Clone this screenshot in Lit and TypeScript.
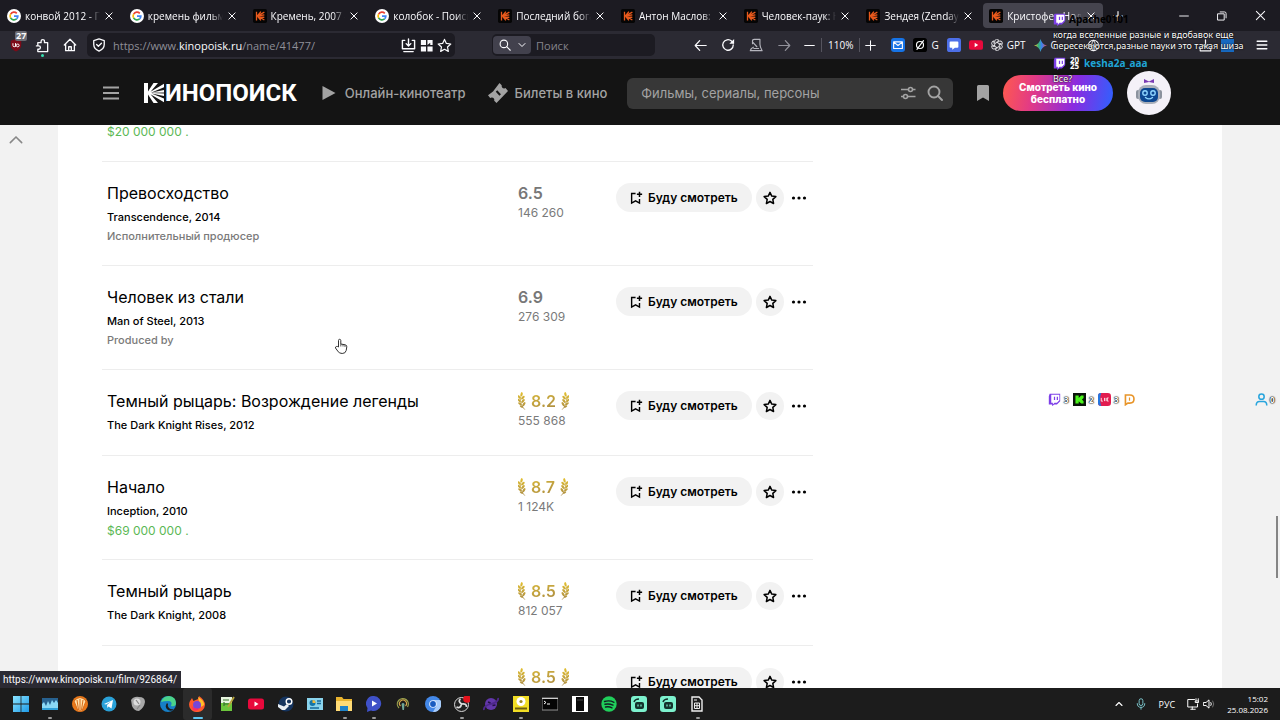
import { LitElement, html, css, svg, nothing, type TemplateResult } from "lit";
import { customElement } from "lit/decorators.js";
import { classMap } from "lit/directives/class-map.js";

type Part = ReturnType<typeof svg>;

const icon = (size: number, body: Part, box = "0 0 16 16"): TemplateResult =>
  html`<svg width=${size} height=${size} viewBox=${box} fill="none" stroke="none" aria-hidden="true">${body}</svg>`;

const line = (d: string, width = 1.5, color = "currentColor"): Part =>
  svg`<path d=${d} stroke=${color} stroke-width=${width} stroke-linecap="round" stroke-linejoin="round"/>`;

const fill = (d: string, color = "currentColor"): Part => svg`<path d=${d} fill=${color}/>`;

/* Brand marks */
const google = svg`<circle cx="8" cy="8" r="8" fill="#fff"/>
  <path d="M4.2 5.8A4.4 4.4 0 0 1 11.2 5" stroke="#ea4335" stroke-width="1.9"/>
  <path d="M4.1 10.2a4.6 4.6 0 0 1 0-4.4" stroke="#fbbc05" stroke-width="1.9"/>
  <path d="M11 11.4a4.5 4.5 0 0 1-6.9-1.3" stroke="#34a853" stroke-width="1.9"/>
  <path d="M8 8.1h4.4a4.4 4.4 0 0 1-1.5 3.3" stroke="#4285f4" stroke-width="1.9"/>`;
const kp = svg`<rect width="16" height="16" rx="2" fill="#050505"/>
  <path d="M4 3v10M5 8l4-5M5 8l8-4.4M5 8l8-1.4M5 8l8 1.6M5 8l8 4.6M5 8l4 5" stroke="#e8591c" stroke-width="1.5"/>`;
const twitch = svg`<path d="M2 1h13v9l-4 4H8l-3 2v-2H1V4z" fill="#7d3fe8"/><path d="M4 2h10v7l-3 3H8l-2 2v-2H4z" fill="#fff"/><path d="M8 4.500v4M11.500 4.500v4" stroke="#7d3fe8" stroke-width="1.500"/>`;
const youtube = svg`<rect y="2.500" width="16" height="11" rx="2.500" fill="#e8093c"/><path d="M6.500 5.500v5l4-2.500z" fill="#fff"/>`;

const cross = line("M3 3l10 10M13 3L3 13", 1.6);
const search = svg`<circle cx="6.500" cy="6.500" r="5" stroke="currentColor" stroke-width="1.500"/>${line("M10.300 10.300l4.700 4.700")}`;
const star = line("M8 1.500l2 4.300 4.700.6-3.500 3.200.9 4.700L8 12l-4.100 2.300.9-4.700L1.300 6.400 6 5.800z", 1.7);
const starThin = line("M8 1.500l2 4.300 4.700.6-3.500 3.200.9 4.700L8 12l-4.100 2.300.9-4.700L1.300 6.400 6 5.800z", 1.3);
const addMark = svg`<path d="M7.500 2.800H3v11l4.500-2.600 4.500 2.600V9" stroke="currentColor" stroke-width="1.600"/><path d="M12 .8v6M9 3.800h6" stroke="currentColor" stroke-width="1.700"/>`;

/* Laurel branch: thin stem with paired leaves */
const laurelBody = svg`<path d="M3.200 3C1.500 8 2.500 13 6.800 17.600" stroke="url(#g)" stroke-width=".8"/>
  <g fill="url(#g)">
    <ellipse cx="3.600" cy="2.200" rx="1.100" ry="2.100" transform="rotate(12 3.600 2.200)"/>
    <ellipse cx="1.100" cy="5" rx="1" ry="2" transform="rotate(-28 1.100 5)"/>
    <ellipse cx="4.900" cy="5.600" rx="1.100" ry="2.300" transform="rotate(45 4.900 5.600)"/>
    <ellipse cx="1.100" cy="8.400" rx="1" ry="2" transform="rotate(-38 1.100 8.400)"/>
    <ellipse cx="5" cy="9" rx="1.100" ry="2.400" transform="rotate(42 5 9)"/>
    <ellipse cx="1.900" cy="11.800" rx="1" ry="2" transform="rotate(-50 1.900 11.800)"/>
    <ellipse cx="5.900" cy="12.200" rx="1.100" ry="2.300" transform="rotate(32 5.900 12.200)"/>
    <ellipse cx="3.500" cy="14.600" rx=".9" ry="1.900" transform="rotate(-64 3.500 14.600)"/>
  </g>`;
const laurel = (flip = false) => html`<svg width="8" height="18" viewBox="0 0 8 18" fill="none" aria-hidden="true">
  <defs><linearGradient id="g" gradientUnits="userSpaceOnUse" x1="0" y1="0" x2="0" y2="18"><stop stop-color="#e3c02f"/><stop offset="1" stop-color="#a98a43"/></linearGradient></defs>
  ${flip ? svg`<g transform="matrix(-1 0 0 1 8 0)">${laurelBody}</g>` : laurelBody}</svg>`;

interface Film {
  title?: string;
  original?: string;
  role?: string;
  budget?: string;
  rating: string;
  votes: string;
  top?: boolean;
}

const films: Film[] = [
  { title: "Превосходство", original: "Transcendence, 2014", role: "Исполнительный продюсер", rating: "6.5", votes: "146 260" },
  { title: "Человек из стали", original: "Man of Steel, 2013", role: "Produced by", rating: "6.9", votes: "276 309" },
  { title: "Темный рыцарь: Возрождение легенды", original: "The Dark Knight Rises, 2012", rating: "8.2", votes: "555 868", top: true },
  { title: "Начало", original: "Inception, 2010", budget: "$69 000 000", rating: "8.7", votes: "1 124K", top: true },
  { title: "Темный рыцарь", original: "The Dark Knight, 2008", rating: "8.5", votes: "812 057", top: true },
  { rating: "8.5", votes: "", top: true },
];

const base = css`
  *, *::before, *::after { box-sizing: border-box; }
  svg { display: block; flex: none; }
  button, input { font: inherit; color: inherit; border: 0; padding: 0; margin: 0; background: none; }
  a { color: inherit; text-decoration: none; }
`;

@customElement("browser-chrome")
export class BrowserChrome extends LitElement {
  static styles = [base, css`
    :host { display: block; font-family: "Open Sans", "Noto Sans", sans-serif; font-size: 10px; color: #fbfbfe; }
    .tabbar { display: flex; height: 31px; background: #1c1b22; }
    .tabs { display: flex; flex: 1; min-width: 0; }
    .tab { flex: 1 1 0; min-width: 0; display: flex; align-items: center; gap: 4px; margin: 3px 2px 3px 1px; padding: 0 7px 0 6px; border-radius: 4px; font-weight: 500; }
    .active { background: #45444e; }
    .tab-title { flex: 1; min-width: 0; white-space: nowrap; -webkit-mask-image: linear-gradient(90deg, #000 84%, transparent); mask-image: linear-gradient(90deg, #000 84%, transparent); }
    .close { display: flex; }
    .window { display: flex; align-items: center; gap: 28px; width: 175px; padding: 0 14px 0 7px; }
    .minimize { margin-left: auto; }
    .toolbar { display: flex; align-items: center; height: 28px; background: #2b2a33; padding-left: 2px; }
    .slot { position: relative; display: flex; align-items: center; justify-content: center; width: 27px; height: 24px; }
    .count { position: absolute; left: 13px; top: -2px; padding: 0 1px; border-radius: 2px; background: #6c6c74; font-size: 9px; line-height: 10px; font-weight: 700; }
    .dot { position: absolute; left: 12px; bottom: 0; width: 3px; height: 3px; border-radius: 2px; background: #35e0b0; }
    .url { display: flex; flex: 1; align-items: center; gap: 5px; height: 24px; margin: 0 37px 0 4px; padding: 0 3px 0 5px; border-radius: 5px; background: #1c1b22; }
    .address { flex: 1; font-size: 11px; color: #8f8f98; white-space: nowrap; padding-left: 2px; }
    .domain { color: #fbfbfe; }
    .page-actions { display: flex; align-items: center; gap: 3px; }
    .find { display: flex; align-items: center; width: 163px; height: 22px; margin-right: 31px; border-radius: 5px; background: #1c1b22; }
    .engine { display: flex; align-items: center; gap: 7px; width: 38px; height: 18px; margin-left: 1px; padding-left: 6px; border-radius: 4px; background: #42414d; }
    .find input { width: 100px; margin-left: 5px; font-size: 11px; outline: 0; }
    .find input::placeholder { color: #85858d; opacity: 1; }
    .right { display: flex; align-items: center; width: 594px; }
    .nav { display: flex; }
    .nav .slot { width: 28px; }
    .dim { color: #92929b; }
    .zoom { display: flex; align-items: center; height: 14px; margin: 0 5px; padding: 0 6px; border: solid #55545e; border-width: 0 1px; }
    .zoom-step { display: flex; width: 14px; justify-content: center; margin-left: 4px; }
    .links { display: flex; align-items: center; gap: 8px; margin-left: 15px; }
    .links a { display: flex; align-items: center; gap: 4px; }
    .end { display: flex; align-items: center; margin-left: auto; padding-right: 12px; }
    .downloads { margin: 0 44px 0 99px; }
  `];

  private tabs: [string, boolean][] = [
    ["конвой 2012 - По", false],
    ["кремень фильм 2", false],
    ["Кремень, 2007 —", true],
    ["колобок - Поиск", false],
    ["Последний богат", true],
    ["Антон Маслов: ф", true],
    ["Человек-паук: Но", true],
    ["Зендея (Zendaya)", true],
    ["Кристофер Нола", true],
  ];

  render() {
    return html`
      <div class="tabbar">
        <div class="tabs">
          ${this.tabs.map(([title, isKp], i) => html`
            <div class=${classMap({ tab: true, active: i === 8 })}>
              ${icon(14, isKp ? kp : google)}
              <span class="tab-title">${title}</span>
              <button class="close" aria-label="Закрыть">${icon(10, cross)}</button>
            </div>`)}
        </div>
        <div class="window">
          <button aria-label="Новая вкладка">${icon(12, line("M8 2v12M2 8h12"))}</button>
          <button class="minimize" aria-label="Свернуть">${icon(10, line("M1 8h14"))}</button>
          <button aria-label="Окно">${icon(10, line("M1.500 4.500h10v10h-10zM5 1.500h7q2.500 0 2.500 2.500v7"))}</button>
          <button aria-label="Закрыть окно">${icon(11, line("M2 2l12 12M14 2L2 14"))}</button>
        </div>
      </div>
      <div class="toolbar">
        <button class="slot" aria-label="uBlock">${icon(14, svg`<path d="M8 1l6 2v5q0 5-6 7.500Q2 13 2 8V3z" fill="#7d0b18"/><path d="M4.500 6v2.500a1.500 1.500 0 0 0 3 0V6v4" stroke="#fff" stroke-width="1.100"/><circle cx="10" cy="8.500" r="1.600" stroke="#fff" stroke-width="1.100"/>`)}<span class="count">27</span></button>
        <button class="slot" aria-label="Расширения">${icon(15, line("M3 7.500V5h3.500V3.500a1.800 1.800 0 0 1 3.600 0V5H13.500v9.500H3V12h1a1.800 1.800 0 0 0 0-3.600H1.500", 1.4))}<span class="dot"></span></button>
        <button class="slot" aria-label="Домой">${icon(14, line("M1.500 8L8 1.500 14.500 8M3 7v7.500h10V7M6.500 14V10h3v4", 1.5))}</button>
        <div class="url">
          ${icon(14, svg`${line("M8 1l6 2v4.500q0 5-6 7.500-6-2.500-6-7.500V3z")}${line("M5.300 7.500l2 2 3.500-3.500")}`)}
          <span class="address">https://www.<span class="domain">kinopoisk.ru</span>/name/41477/</span>
          <div class="page-actions">
            <button aria-label="Сохранить">${icon(15, line("M4 2.500H1.500v9h13v-9H12M8 1v7M5.500 6L8 8.500 10.500 6M3 14.500h10"))}</button>
            <button aria-label="Сетка">${icon(15, fill("M2 2h5.500v5.500H2zM2 9h5.500v5.500H2zM9 9h5.500v5.500H9zM9 2h5.500v5.500H12V5L9 7.500z"))}</button>
            <button aria-label="Закладка">${icon(15, starThin)}</button>
          </div>
        </div>
        <div class="find">
          <span class="engine">${icon(12, search)}${icon(8, line("M2 5l6 6 6-6", 2))}</span>
          <input aria-label="Поиск" placeholder="Поиск">
        </div>
        <div class="right">
          <div class="nav">
            <button class="slot" aria-label="Назад">${icon(13, line("M15 8H1.500M7 2L1.500 8 7 14"))}</button>
            <button class="slot" aria-label="Обновить">${icon(14, svg`${line("M14 8a6 6 0 1 1-2-4.500L14 5.500")}${fill("M15 1v5.500H9.500z")}`)}</button>
            <button class="slot" aria-label="Закладки">${icon(14, line("M4 6.500V3.500Q4 1.500 6 1.500h6.500V7Q12.500 10 15 14.500H1.500Q2 11.500 5 10.500M4.500 5L9 10M5.500 12h5.500", 1.3, "#b5b5bd"))}</button>
            <button class="slot dim" aria-label="Вперёд">${icon(13, line("M1 8h13.500M9 2l5.500 6L9 14"))}</button>
          </div>
          <button class="zoom-step" aria-label="Уменьшить">${icon(11, line("M1 8h14"))}</button>
          <span class="zoom">110%</span>
          <button aria-label="Увеличить">${icon(11, line("M1 8h14M8 1v14"))}</button>
          <div class="links">
            <a href="#" aria-label="Почта">${icon(14, svg`<rect width="16" height="16" rx="3.500" fill="#1673e6"/>${line("M3 4.500h10v7.500H3zM3.500 5L8 8.500 12.500 5", 1.3)}`)}</a>
            <a href="#">${icon(14, svg`<rect width="16" height="16" rx="3" fill="#000"/><circle cx="8" cy="8" r="4" stroke="#fff" stroke-width="1.300"/>${line("M4.500 13L12 3", 1.3)}`)}G</a>
            <a href="#" aria-label="Чат">${icon(14, svg`<rect width="16" height="16" rx="3" fill="#4d6fe8"/>${fill("M4 4h8q1 0 1 1v5q0 1-1 1H9l-3 2.500V11H4q-1 0-1-1V5q0-1 1-1z", "#fff")}`)}</a>
            <a href="#" aria-label="YouTube">${icon(14, youtube)}</a>
            <a href="#">${icon(12, svg`<g stroke="#e4e4e8" stroke-width="1.200">${[0, 60, 120, 180, 240, 300].map(a => svg`<path transform="rotate(${a} 8 8)" d="M8 4.500L5 6.300V2.800a3 3 0 0 1 5.500-1l-3 1.800"/>`)}</g>`)}GPT</a>
            <a href="#">${icon(13, svg`<defs><linearGradient id="gem"><stop stop-color="#f8bd32"/><stop offset=".35" stop-color="#36b37a"/><stop offset=".6" stop-color="#3b82f6"/><stop offset="1" stop-color="#e64b4b"/></linearGradient></defs>${fill("M8 0q1.500 6.500 8 8-6.500 1.500-8 8-1.500-6.500-8-8 6.500-1.500 8-8z", "url(#gem)")}`)}С</a>
          </div>
          <div class="end">
            ${icon(13, svg`<circle cx="8" cy="8" r="6.500" stroke="currentColor" stroke-width="1.300"/>${line("M1.500 8h13M8 1.500q-5 6.500 0 13M8 1.500q5 6.500 0 13", 1.2)}`)}
            <button class="downloads" aria-label="Загрузки">${icon(13, line("M8 1v9M4.500 7L8 10.500 11.500 7M1.500 11v3.500h13V11", 1.5))}</button>
            <button aria-label="Меню">${icon(12, line("M1.500 3h13M1.500 8h13M1.500 13h13", 1.7))}</button>
          </div>
        </div>
      </div>`;
  }
}

@customElement("site-header")
export class SiteHeader extends LitElement {
  static styles = [base, css`
    :host { display: flex; align-items: center; height: 66px; padding: 2px 109px 0 103px; background: #141414; color: #a3a3a3; font-family: Inter, sans-serif; font-size: 13px; font-weight: 500; }
    .logo { display: flex; align-items: center; gap: 1px; margin-left: 25px; color: #fff; font: 700 24px/28px Roboto, sans-serif; }
    .nav { display: flex; align-items: center; gap: 8px; white-space: nowrap; }
    .cinema { margin-left: 24px; }
    .tickets { margin-left: 22px; gap: 7px; }
    .search { display: flex; align-items: center; flex: 1; gap: 11px; height: 31px; margin-left: 20px; padding: 0 10px 0 14px; border-radius: 6px; background: #373737; }
    .search input { flex: 1; min-width: 0; outline: 0; font-weight: 400; }
    .search input::placeholder { color: #a3a3a3; opacity: 1; }
    .mark { margin: 0 14px 0 24px; }
    .watch { width: 110px; height: 36px; border-radius: 18px; color: #fff; font-size: 10px; line-height: 12px; font-weight: 800; background: linear-gradient(100deg, #ff5a4e 0%, #e23a86 28%, #8a2be0 65%, #2d62ff 100%); }
    .avatar { display: flex; align-items: center; justify-content: center; width: 44px; height: 44px; margin-left: 14px; border-radius: 22px; background: #f4f1f8; }
  `];

  render() {
    return html`
      <button aria-label="Меню">${icon(16, svg`<path d="M0 2.500h16M0 8h16M0 13.500h16" stroke="#a3a3a3" stroke-width="1.800"/>`)}</button>
      <a class="logo" href="#" aria-label="Кинопоиск">
        <svg width="20" height="20" viewBox="0 0 20 20" aria-hidden="true"><path fill="#fff" d="M0 0h4v8.500L9.500 0H14L6.500 8.700 20 .8v3.400L7.500 9.500 20 7v2.400l-12.500.3V10l12.500.4V13L7.500 10.500 20 15.600v3.600L6.500 11.300 14 20H9.500L4 11.500V20H0z"/></svg><span>ИНОПОИСК</span>
      </a>
      <a class="nav cinema" href="#">${icon(16, fill("M1.500 1l13 7-13 7z"))}Онлайн-кинотеатр</a>
      <a class="nav tickets" href="#">${icon(20, svg`<path d="M11.500 0l2.200 2.200q-.4 3 2.600 3.200l1.200-.4L20 8 8.500 20l-2.300-2.300q.6-3-2.500-3.200L2.200 15 0 12.300 5 8.500z" fill="currentColor"/><path d="M8.500 8l3.700 4" stroke="#141414" stroke-width="2"/>`, "0 0 20 20")}Билеты в кино</a>
      <div class="search">
        <input aria-label="Поиск по сайту" placeholder="Фильмы, сериалы, персоны">
        <button aria-label="Фильтры">${icon(16, svg`<g stroke="currentColor" stroke-width="1.600"><path d="M1 4.500h7.500M12.500 4.500H15.500M1 11.500h2.500M7.500 11.500h8"/><circle cx="10.500" cy="4.500" r="2"/><circle cx="5.500" cy="11.500" r="2"/></g>`)}</button>
        <button aria-label="Найти">${icon(16, svg`<circle cx="7" cy="7" r="5.500" stroke="currentColor" stroke-width="1.900"/>${line("M11 11l4 4", 1.9)}`)}</button>
      </div>
      <a class="mark" href="#" aria-label="Буду смотреть"><svg width="12" height="16" viewBox="0 0 12 16"><path d="M0 1.500Q0 0 1.500 0h9Q12 0 12 1.500V16l-6-3.500L0 16z" fill="currentColor"/></svg></a>
      <button class="watch">Смотреть кино<br>бесплатно</button>
      <a class="avatar" href="#" aria-label="Профиль">${icon(28, svg`
        <path d="M9 0l5 2.500L19 0v4l-5-1L9 4z" fill="#7a3bb4"/>
        <rect x="1" y="11" width="4" height="9" rx="2" fill="#8b929e"/><rect x="23" y="11" width="4" height="9" rx="2" fill="#8b929e"/>
        <rect x="3" y="6" width="22" height="19" rx="8" fill="#a9afba"/><rect x="5" y="9" width="18" height="14" rx="5" fill="#0d4791"/>
        <circle cx="10" cy="14" r="2.200" stroke="#8fd6ff" stroke-width="1.400"/><circle cx="18" cy="14" r="2.200" stroke="#8fd6ff" stroke-width="1.400"/>
        <path d="M10.500 18.500q3.500 2.800 7 0" stroke="#8fd6ff" stroke-width="1.400" stroke-linecap="round"/>`, "0 0 28 28")}</a>`;
  }
}

@customElement("film-list")
export class FilmList extends LitElement {
  static styles = [base, css`
    :host { display: block; max-width: 711px; font-family: Inter, sans-serif; font-size: 12px; line-height: 19px; color: #000; }
    .previous { margin-top: -3px; padding: 0 5px 20px; border-bottom: 1px solid #ededed; }
    .row { display: grid; grid-template-columns: minmax(0, 1fr) 98px 197px; min-height: 86px; padding: 19px 0 19px 5px; border-bottom: 1px solid #ededed; }
    .title { display: block; margin-bottom: 3px; font-size: 16px; line-height: 24px; font-weight: 400; }
    .line { display: block; }
    .small { font-size: 11px; font-weight: 500; }
    .muted { color: #7a7a7a; }
    .money { color: #5bb855; }
    .score { display: flex; align-items: center; gap: 5px; height: 24px; color: #777; font-size: 16px; font-weight: 600; }
    .top .value { color: transparent; background: linear-gradient(160deg, #d9b93b, #a88842); -webkit-background-clip: text; background-clip: text; }
    .votes { display: block; line-height: 16px; color: #7a7a7a; }
    .actions { display: flex; align-items: center; gap: 4px; height: 29px; margin-top: 2px; }
    .will { display: flex; align-items: center; gap: 5px; width: 136px; height: 29px; padding-left: 13px; border-radius: 15px; background: #f2f2f2; font-weight: 600; white-space: nowrap; }
    .fav { display: flex; align-items: center; justify-content: center; width: 28px; height: 28px; border-radius: 14px; background: #f2f2f2; }
    .more { display: flex; align-items: center; justify-content: center; width: 22px; }
  `];

  render() {
    return html`
      <div class="previous"><span class="line money">$20 000 000 .</span></div>
      ${films.map(f => html`
        <div class="row">
          <div>
            ${f.title ? html`<a class="title" href="#">${f.title}</a>` : nothing}
            ${f.original ? html`<span class="line small">${f.original}</span>` : nothing}
            ${f.role ? html`<span class="line small muted">${f.role}</span>` : nothing}
            ${f.budget ? html`<span class="line money">${f.budget} .</span>` : nothing}
          </div>
          <div>
            <span class=${classMap({ score: true, top: !!f.top })}>
              ${f.top ? laurel() : nothing}<span class="value">${f.rating}</span>${f.top ? laurel(true) : nothing}
            </span>
            <span class="votes">${f.votes}</span>
          </div>
          <div class="actions">
            <button class="will">${icon(14, addMark)}Буду смотреть</button>
            <button class="fav" aria-label="Оценить">${icon(14, star)}</button>
            <button class="more" aria-label="Ещё">${icon(16, svg`<g fill="currentColor"><circle cx="2.500" cy="8" r="1.600"/><circle cx="8" cy="8" r="1.600"/><circle cx="13.500" cy="8" r="1.600"/></g>`)}</button>
          </div>
        </div>`)}`;
  }
}

@customElement("task-bar")
export class TaskBar extends LitElement {
  static styles = [base, css`
    :host { display: flex; align-items: center; justify-content: space-between; height: 32px; padding: 0 12px 0 6px; background: #1c1c1c; color: #fff; font-family: "Open Sans", "Noto Sans", sans-serif; font-size: 9px; }
    .apps { display: flex; width: 706px; height: 32px; }
    .app { position: relative; display: flex; flex: 1 1 0; align-items: center; justify-content: center; }
    .current { background: #2b2b2b; border-radius: 3px; }
    .open::after { content: ""; position: absolute; bottom: 1px; left: 13px; width: 4px; height: 2px; border-radius: 1px; background: #9a9a9a; }
    .current::after { content: ""; position: absolute; bottom: 1px; left: 10px; width: 10px; height: 2px; border-radius: 1px; background: #5cc8f5; }
    .tray { display: flex; align-items: center; gap: 12px; }
    .pair { display: flex; gap: 4px; }
    .clock { text-align: right; font-size: 8px; line-height: 11px; }
  `];

  private apps: Part[] = [
    svg`<defs><linearGradient id="w" x2="1" y2="1"><stop stop-color="#8be4ff"/><stop offset="1" stop-color="#1e9be8"/></linearGradient></defs><path d="M0 0h7.600v7.600H0zM8.400 0H16v7.600H8.400zM0 8.400h7.600V16H0zM8.400 8.400H16V16H8.400z" fill="url(#w)"/>`,
    svg`<rect y="2" width="16" height="12" fill="#27618f"/><path d="M0 12V8l2-2 2 4 2-5 2 4 2-5 2 3 2-3 2 3v5z" fill="#8ad8f5"/><path d="M0 12h16v2H0z" fill="#2f9fd8"/>`,
    svg`<circle cx="8" cy="8" r="8" fill="#e97819"/><path d="M2 5q6-7 12 0l-4 10H6zM5 4l1.500 10M8 3v12M11 4L9.500 14" fill="#ffe0a8" stroke="#d86b18" stroke-width="1"/>`,
    svg`<circle cx="8" cy="8" r="7.500" fill="#2aa1d8"/><path d="M3 8l9-4-1.500 8.500-3-2-1 1.500-.5-3 4-3.500-5 3z" fill="#fff"/>`,
    svg`<path d="M1 4q3-4 8-3 6 0 6 5-1 6-6 9-5 0-7-5z" fill="#a7a7a7"/><circle cx="7" cy="6" r="3.500" fill="#ddd"/><path d="M6 4l3 4M10 9l-3 4" stroke="#888" stroke-width="1.200"/>`,
    svg`<circle cx="8" cy="8" r="8" fill="#167fc6"/><path d="M1 6Q3 0 9 0q7 1 7 7 0 4-5 3 2-5-3-5-4 0-7 1z" fill="#4bd38a"/><path d="M7 7q-3 4 1 7 4 2 6-1-3 1-5-1-2-2-1-4z" fill="#1c1c1c"/>`,
    svg`<path d="M8 16A7.500 7.500 0 0 1 1 5l2-3 1.500 3L9 3l1-3q6 4 6 9a7.500 7.500 0 0 1-8 7z" fill="#ff5a2b"/><path d="M9 1q6 3 6 8l-3 2-2-6z" fill="#ffc328"/><circle cx="8" cy="9" r="4" fill="#7647d8"/><path d="M2 9q3 5 9 3-3 4-7 2z" fill="#f92b63"/>`,
    svg`<path d="M2 1h11v14H2z" fill="#e8f5df"/><path d="M2 7h11v8H2z" fill="#6cc63c"/><path d="M4 4h6M5 6v4M5 8h5" stroke="#37732d" stroke-width="1.200"/><path d="M15 1L9 11" stroke="#b7a33b" stroke-width="1.800"/>`,
    youtube,
    svg`<circle cx="8" cy="8" r="7.500" fill="#15345f"/><circle cx="11" cy="5.500" r="2.800" stroke="#fff" stroke-width="1.400"/><path d="M0 8l6 2.500L9 8l2 2-4 4H4L0 11z" fill="#e8eef5"/>`,
    svg`<path d="M0 2h16v12H0z" fill="#8ad4ed"/><circle cx="5.500" cy="7" r="3" fill="#1575a8"/><path d="M5.500 7V4a3 3 0 0 1 3 3z" fill="#f4bb39"/><path d="M10 5h4M10 7.500h4M3 12h9" stroke="#176a9b" stroke-width="1.300"/>`,
    svg`<path d="M0 1h6l1.500 2H16v12H0z" fill="#e9b42f"/><path d="M0 5h16v10H0z" fill="#ffdb75"/><path d="M4 10h8v5H4z" fill="#1f83c9"/>`,
    svg`<path d="M8 0a7.500 7.500 0 1 1-3 14.500L1 16l.5-4A7.500 7.500 0 0 1 8 0z" fill="#3f51c8"/><path d="M6 4.500v6l5-3z" fill="#fff"/>`,
    svg`<path d="M4 12A5.500 5.500 0 1 1 12.500 11" stroke="#98a04d" stroke-width="1.300"/><path d="M5.500 10a3.500 3.500 0 1 1 5 0" stroke="#d3a64b" stroke-width="1.200"/><path d="M6.500 8q1.500-2 3 0L9 14H7.500z" fill="#6fa799"/>`,
    svg`<circle cx="8" cy="8" r="8" fill="#4388e8"/><path d="M8 4h7.300A8 8 0 0 1 8 16l3.400-6z" fill="#a9cdfa"/><circle cx="8" cy="8" r="3.800" fill="#e5f0ff"/><circle cx="8" cy="8" r="2.900" fill="#195cc0"/>`,
    svg`<circle cx="7.500" cy="8.500" r="7" fill="#222" stroke="#d8d8d8"/><path d="M7.500 8q-4-3-1-5M7.500 8q5-1 5 3M7.500 8q-1 5-5 3" stroke="#ddd" stroke-width="1.700"/><circle cx="13" cy="3" r="3.800" fill="#e4121c"/>`,
    svg`<circle cx="8" cy="8" r="6" fill="#6237aa"/><path d="M1 14Q0 10 8 8t7-6" stroke="#4d278d" stroke-width="1.800"/><path d="M5 6l2.500 1M9.500 9.500l3-.5" stroke="#231044" stroke-width="1.500"/>`,
    svg`<path d="M0 0h16v16H0z" fill="#f1dd24"/><circle cx="8" cy="5.500" r="4.500" fill="#fff"/><circle cx="8" cy="5.500" r="1.600" fill="#9d8b20"/><path d="M2 12.500h12" stroke="#6c5d0e" stroke-width="2"/>`,
    svg`<path d="M0 2h16v12H0z" fill="#050505" stroke="#929292"/><path d="M0 2.500h16" stroke="#cfcfcf"/><path d="M2 5l2 1.500L2 8M5 8h3" stroke="#fff"/>`,
    svg`<path d="M0 0h16v16H0z" fill="#fff"/><path d="M4 1h8v14H4z" fill="#080808"/><path d="M5 4h6" stroke="#444"/>`,
    svg`<circle cx="8" cy="8" r="7.700" fill="#20cf5b"/><path d="M3.500 5.500q5-1.500 9.500.8M4 8.300q4-1 8 .8M4.500 11q3.500-.8 6.500.8" stroke="#122" stroke-width="1.400" stroke-linecap="round"/>`,
    svg`<rect width="16" height="16" rx="3" fill="#7df2ce"/><rect x="4" y="6" width="9" height="7" rx="2" fill="#14332c"/><path d="M3 6q1-3 5-3" stroke="#14332c" stroke-width="1.500"/><path d="M7 8.500v2M10 8.500v2" stroke="#7df2ce" stroke-width="1.200"/>`,
    svg`<rect width="16" height="16" rx="3" fill="#7df2ce"/><rect x="4" y="6" width="9" height="7" rx="2" fill="#14332c"/><path d="M3 6q1-3 5-3" stroke="#14332c" stroke-width="1.500"/><path d="M7 8.500v2M10 8.500v2" stroke="#7df2ce" stroke-width="1.200"/>`,
    svg`<path d="M3 1h7l3 3v11H3z" stroke="#eee" stroke-width="1.400"/><path d="M5.500 7h5v5.500h-5zM5.500 9.700h5M8 7v5.500M5 4h3" stroke="#eee"/>`,
  ];

  render() {
    const opened = [1, 11, 12, 15, 17, 23];
    return html`
      <div class="apps">
        ${this.apps.map((a, i) => html`<span class=${classMap({ app: true, open: opened.includes(i), current: i === 6 })}>${icon(16, a)}</span>`)}
      </div>
      <div class="tray">
        ${icon(8, line("M2 11l6-6 6 6", 2.2))}
        ${icon(12, svg`<rect x="5.500" y="1" width="5" height="9" rx="2.500" stroke="#7cc5cc" stroke-width="1.300"/>${line("M3 7.500q0 5 5 5t5-5M8 12.500V15", 1.3, "#7cc5cc")}`)}
        <span>РУС</span>
        <span class="pair">
          ${icon(12, line("M10 2H1v10h13V8M5 15h6M7 12v3M12 1v3M15 1v3M11.500 4h4v2h-4z", 1.3))}
          ${icon(12, svg`${line("M1 6h3l4-3.500v11L4 10H1zM10.500 6q1.500 2 0 4", 1.3)}${line("M13 4q3 4 0 8", 1.2, "#777")}`)}
        </span>
        <span class="clock">15:02<br>25.08.2026</span>
      </div>`;
  }
}

@customElement("stream-overlay")
export class StreamOverlay extends LitElement {
  static styles = [base, css`
    :host { position: absolute; inset: 0; pointer-events: none; font-family: "Noto Sans", sans-serif; color: #fff; }
    .chat { position: absolute; right: 0; top: 12px; width: 228px; padding-left: 1px; }
    .author { display: flex; align-items: center; gap: 3px; height: 14px; font-size: 10px; font-weight: 700; }
    .black { color: #000; }
    .blue { color: #20a4d6; }
    .message { font-size: 9px; line-height: 11px; margin: 3px 0 5px; white-space: nowrap; text-shadow: 0 0 2px #000, 0 0 1px #000; }
    .hit { background: #1769c0; }
    .last { margin: 3px 0 0; }
    .year { width: 11px; margin-right: 1px; font-size: 8px; line-height: 6px; text-align: center; color: #fff; }
    .viewers { position: absolute; right: 144px; top: 393px; display: flex; align-items: center; gap: 3px; }
    .people { position: absolute; right: 4px; top: 393px; display: flex; align-items: center; gap: 2px; }
    .n { width: 6px; font-size: 8px; line-height: 12px; font-weight: 700; color: #fff; text-shadow: 0 0 1px #000, 0 0 1px #000, 0 0 2px #000; }
    .cursor { position: absolute; left: 333px; top: 338px; }
    .status { position: absolute; left: 0; bottom: 32px; height: 17px; padding: 0 4px 0 3px; background: #2b2a33; color: #fbfbfe; font-family: Roboto, sans-serif; font-size: 10px; line-height: 17px; }
  `];

  render() {
    return html`
      <div class="chat">
        <div class="author black">${icon(13, twitch)}Apache0101</div>
        <div class="message">когда вселенные разные и вдобавок еще<br>пересекаются,разные пауки это такая <span class="hit">ши</span>за</div>
        <div class="author blue">${icon(13, twitch)}<span class="year">20<br>25</span>kesha2a_aaa</div>
        <div class="message last">Все?</div>
      </div>
      <div class="viewers">
        ${icon(13, twitch)}<span class="n">3</span>
        ${icon(13, svg`<path d="M0 0h16v16H0z" fill="#0b140b"/><path d="M3 3h4v3l3-3h3v3l-2 2 2 2v3h-3l-3-3v3H3z" fill="#4cf51e"/>`)}<span class="n">2</span>
        ${icon(13, svg`<rect width="16" height="16" rx="4" fill="#e21c4f"/><path d="M4 0H3Q0 0 0 4v8q0 4 4 4-3-8 0-16z" fill="#2476e0"/><path d="M4 6v4h2M8 6v4M10 6v4M13 6h-1.500v4H13" stroke="#fff"/>`)}<span class="n">3</span>
        ${icon(13, svg`<path d="M3 2.500h5.500q5 0 5 5t-5 5H6L3 14.500z" stroke="#e8952a" stroke-width="2"/><path d="M8 5.500v4" stroke="#e8952a" stroke-width="1.500"/>`)}
      </div>
      <div class="people">
        ${icon(13, svg`<circle cx="8" cy="4.500" r="3.300" stroke="#29a5dd" stroke-width="1.900"/><path d="M1.500 15.500q0-5 4-5h5q4 0 4 5" stroke="#29a5dd" stroke-width="1.900"/>`)}<span class="n">0</span>
      </div>
      <div class="cursor">${icon(16, svg`<path d="M5.500 9V2.500q0-1.200 1.100-1.200t1.200 1.200V6l4.500.8q1.700.4 1.500 2l-.6 3.700q-.7 3-4 3t-4.500-2.500L2.500 10q-.3-1.200.8-1.500T5.500 9z" fill="#fff" stroke="#333" stroke-width="1"/><path d="M7.800 6v2.500M10 6.500V8.500M12 7v2" stroke="#333" stroke-width=".8"/>`)}</div>
      <div class="status">https://www.kinopoisk.ru/film/926864/</div>`;
  }
}

@customElement("app-root")
export class AppRoot extends LitElement {
  static styles = [base, css`
    :host { position: relative; display: flex; flex-direction: column; height: 100vh; overflow: hidden; }
    browser-chrome, site-header, task-bar { flex: none; }
    main { position: relative; flex: 1; min-height: 0; overflow: hidden; display: grid; grid-template-columns: 58px minmax(0, 1fr) 58px; background: #f2f2f2; }
    .up { justify-self: start; align-self: start; margin: 8px 0 0 9px; color: #888; border: 0; padding: 0; background: none; }
    .page { padding-left: 44px; background: #fff; }
    .thumb { position: absolute; right: 2px; top: 391px; width: 2px; height: 62px; background: #858585; }
  `];

  render() {
    return html`
      <browser-chrome></browser-chrome>
      <site-header></site-header>
      <main>
        <button class="up" aria-label="Наверх">${icon(14, line("M1.500 11L8 4.500l6.500 6.500", 1.8))}</button>
        <div class="page"><film-list></film-list></div>
        <span class="thumb"></span>
      </main>
      <task-bar></task-bar>
      <stream-overlay></stream-overlay>`;
  }
}
